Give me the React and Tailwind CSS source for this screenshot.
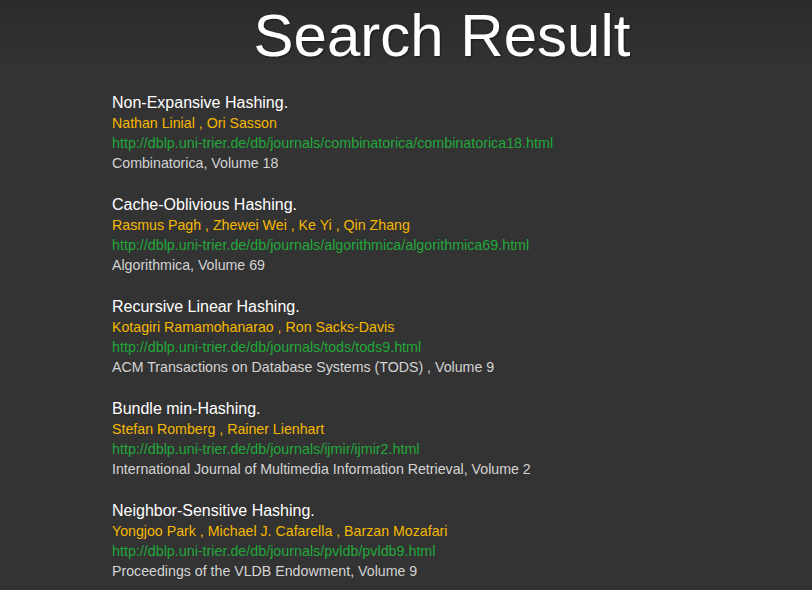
const entries = [
  {
    title: "Non-Expansive Hashing.",
    authors: "Nathan Linial , Ori Sasson",
    url: "http://dblp.uni-trier.de/db/journals/combinatorica/combinatorica18.html",
    venue: "Combinatorica, Volume 18",
  },
  {
    title: "Cache-Oblivious Hashing.",
    authors: "Rasmus Pagh , Zhewei Wei , Ke Yi , Qin Zhang",
    url: "http://dblp.uni-trier.de/db/journals/algorithmica/algorithmica69.html",
    venue: "Algorithmica, Volume 69",
  },
  {
    title: "Recursive Linear Hashing.",
    authors: "Kotagiri Ramamohanarao , Ron Sacks-Davis",
    url: "http://dblp.uni-trier.de/db/journals/tods/tods9.html",
    venue: "ACM Transactions on Database Systems (TODS) , Volume 9",
  },
  {
    title: "Bundle min-Hashing.",
    authors: "Stefan Romberg , Rainer Lienhart",
    url: "http://dblp.uni-trier.de/db/journals/ijmir/ijmir2.html",
    venue: "International Journal of Multimedia Information Retrieval, Volume 2",
  },
  {
    title: "Neighbor-Sensitive Hashing.",
    authors: "Yongjoo Park , Michael J. Cafarella , Barzan Mozafari",
    url: "http://dblp.uni-trier.de/db/journals/pvldb/pvldb9.html",
    venue: "Proceedings of the VLDB Endowment, Volume 9",
  },
];

export default function App() {
  return (
    <div
      className="w-[812px] h-[590px] overflow-hidden bg-[linear-gradient(to_bottom,#2b2b2b_0px,#333333_70px,#333333_100%)]"
      style={{ fontFamily: '"Liberation Sans", Arial, sans-serif' }}
    >
      <h1 className="pl-[72px] pt-[3px] text-center text-white text-[60px] leading-[66px] [text-shadow:1px_1px_2px_rgba(0,0,0,0.5)]">
        Search Result
      </h1>
      <div className="pl-[112px] pt-[24px] flex flex-col gap-[22px]">
        {entries.map((e) => (
          <div key={e.title} className="flex flex-col">
            <div className="text-[16px] leading-[20px] text-white">{e.title}</div>
            <div className="text-[14.2px] leading-[20px] text-[#f5b800]">{e.authors}</div>
            <div className="text-[14.3px] leading-[20px] text-[#22a83a]">{e.url}</div>
            <div className="text-[14.2px] leading-[20px] text-[#d4d4d4]">{e.venue}</div>
          </div>
        ))}
      </div>
    </div>
  );
}
